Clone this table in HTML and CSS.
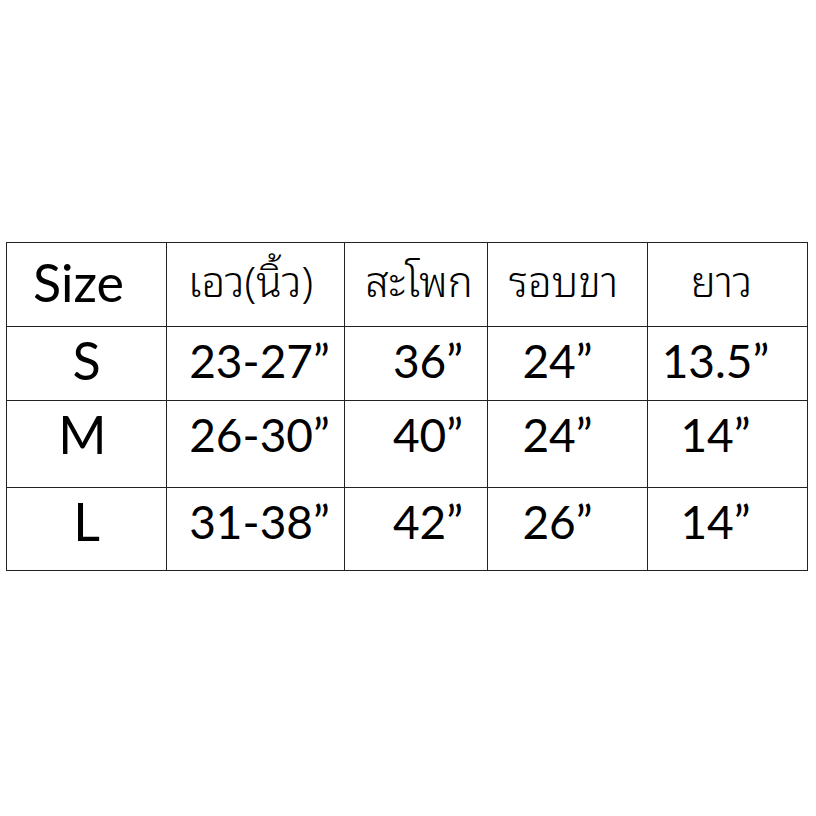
FILE: index.html
```html
<!DOCTYPE html>
<html lang="th">
<head>
<meta charset="utf-8">
<link rel="stylesheet" href="styles.css">
</head>
<body>
<div class="page">
  <table class="sizes">
    <colgroup>
      <col class="c1"><col class="c2"><col class="c3"><col class="c4"><col class="c5">
    </colgroup>
    <tr class="head">
      <td class="size-h">Size</td>
      <td class="th">เอว(นิ้ว)</td>
      <td class="th">สะโพก</td>
      <td class="th">รอบขา</td>
      <td class="th">ยาว</td>
    </tr>
    <tr class="r1">
      <td class="sz">S</td>
      <td>23-27”</td>
      <td>36”</td>
      <td>24”</td>
      <td>13.5”</td>
    </tr>
    <tr class="r2">
      <td class="sz">M</td>
      <td>26-30”</td>
      <td>40”</td>
      <td>24”</td>
      <td>14”</td>
    </tr>
    <tr class="r3">
      <td class="sz">L</td>
      <td>31-38”</td>
      <td>42”</td>
      <td>26”</td>
      <td>14”</td>
    </tr>
  </table>
</div>
</body>
</html>
```
FILE: styles.css
```css
html, body {
  margin: 0;
  background: #fff;
}
.page {
  padding: 242px 0 0 6px;
}
.sizes {
  border-collapse: collapse;
  table-layout: fixed;
  width: 801px;
  font-family: Lato, "Open Sans", sans-serif;
  color: #000;
}
.c1 { width: 160px; }
.c2 { width: 178px; }
.c3 { width: 143px; }
.c4 { width: 160px; }
.c5 { width: 160px; }
.sizes td {
  border: 1px solid #222;
  text-align: center;
  vertical-align: top;
  padding: 6px 0 0 0;
  font-size: 46px;
  line-height: 55px;
  white-space: nowrap;
  box-sizing: border-box;
}
.head td { height: 84px; padding-top: 12px; }
.r1 td { height: 74px; }
.r2 td { height: 87px; }
.r3 td { height: 83px; }

/* data column offsets (text sits slightly off-centre in the source) */
.sizes tr td:nth-child(2) { padding-left: 8px; }
.sizes tr td:nth-child(3) { padding-left: 24px; }
.sizes tr td:nth-child(4) { padding-right: 20px; }
.sizes tr td:nth-child(5) { padding-right: 24px; }

.sizes td.size-h {
  font-size: 52px;
  text-align: left;
  padding-left: 26px;
}
.sizes td.th {
  font-family: "Noto Sans Thai Looped", "Noto Sans Thai", Lato, sans-serif;
  font-size: 42px;
  font-weight: 300;
  line-height: 60px;
  padding-top: 5px;
  padding-left: 0;
  padding-right: 0;
}
.sizes td.th:nth-child(2) { padding-right: 18px; }
.sizes td.th:nth-child(3) { padding-left: 6px; }
.sizes td.th:nth-child(4) { padding-right: 8px; }
.sizes td.th:nth-child(5) { padding-right: 12px; }
.sizes td.sz {
  font-size: 52px;
}
.r2 td.sz { padding-right: 8px; }
```
